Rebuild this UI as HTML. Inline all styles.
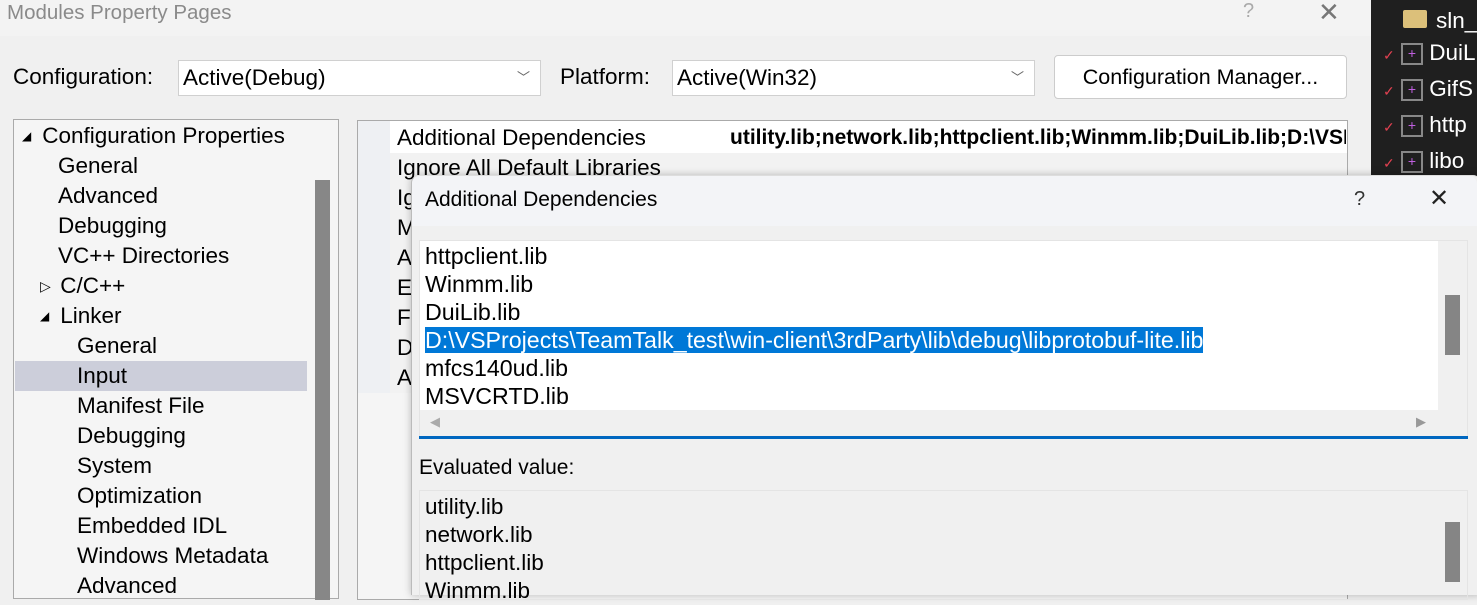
<!DOCTYPE html>
<html><head><style>
*{margin:0;padding:0;box-sizing:border-box}
body{width:1477px;height:590px;overflow:hidden;background:#f0f0f0;font-family:"Liberation Sans",sans-serif;font-size:22.5px;color:#000;position:relative}
.a{position:absolute;white-space:nowrap}
.r{height:30px;line-height:30px;position:relative}
.t{display:inline-block;width:14px;font-size:12px;vertical-align:top}
</style></head><body>
<div class="a" style="left:0;top:0;width:1371px;height:36px;background:#f3f3f3"></div>
<div class="a" style="left:7px;top:1px;color:#8a8a8a;font-size:20.5px">Modules Property Pages</div>
<div class="a" style="left:1243px;top:0;color:#aaa;font-size:20px">?</div>
<div class="a" style="left:1318px;top:-3px;color:#777;font-size:26px">✕</div>

<div class="a" style="left:13px;top:64px">Configuration:</div>
<div class="a" style="left:178px;top:60px;width:363px;height:36px;background:#fff;border:1px solid #d0d0d0;padding:4px 4px">Active(Debug)<span style="position:absolute;right:10px;top:6px;font-size:13px;color:#666">﹀</span></div>
<div class="a" style="left:560px;top:64px">Platform:</div>
<div class="a" style="left:672px;top:60px;width:363px;height:36px;background:#fff;border:1px solid #d0d0d0;padding:4px 4px">Active(Win32)<span style="position:absolute;right:10px;top:6px;font-size:13px;color:#666">﹀</span></div>
<div class="a" style="left:1054px;top:55px;width:293px;height:44px;background:#fff;border:1px solid #ccc;border-radius:4px;text-align:center;padding-top:9px;font-size:21.5px">Configuration Manager...</div>

<!-- tree -->
<div class="a" style="left:13px;top:119px;width:326px;height:480px;background:#f5f5f5;border:1px solid #aaa"></div>
<div class="a" style="left:315px;top:180px;width:15px;height:420px;background:#878787"></div>
<div class="a" style="left:15px;top:361px;width:292px;height:30px;background:#ccceda"></div>
<div class="a" style="left:22px;top:121px">
<div class="r"><span class="t">◢</span>&nbsp;Configuration Properties</div>
<div class="r" style="padding-left:36px">General</div>
<div class="r" style="padding-left:36px">Advanced</div>
<div class="r" style="padding-left:36px">Debugging</div>
<div class="r" style="padding-left:36px">VC++ Directories</div>
<div class="r" style="padding-left:18px"><span class="t" style="font-size:14px">▷</span>&nbsp;C/C++</div>
<div class="r" style="padding-left:18px"><span class="t">◢</span>&nbsp;Linker</div>
<div class="r" style="padding-left:55px">General</div>
<div class="r" style="padding-left:55px">Input</div>
<div class="r" style="padding-left:55px">Manifest File</div>
<div class="r" style="padding-left:55px">Debugging</div>
<div class="r" style="padding-left:55px">System</div>
<div class="r" style="padding-left:55px">Optimization</div>
<div class="r" style="padding-left:55px">Embedded IDL</div>
<div class="r" style="padding-left:55px">Windows Metadata</div>
<div class="r" style="padding-left:55px">Advanced</div>
</div>

<!-- property grid -->
<div class="a" style="left:357px;top:120px;width:991px;height:480px;background:#f5f5f5;border:1px solid #aaa"></div>
<div class="a" style="left:358px;top:121px;width:32px;height:272px;background:#eef0f3"></div>
<div class="a" style="left:390px;top:121px;width:957px;height:272px;background:#f2f2f2"></div>
<div class="a" style="left:390px;top:121px;width:957px;height:32px;background:#fff"></div>
<div class="a" style="left:397px;top:123px">
<div class="r">Additional Dependencies</div><div class="r">Ignore All Default Libraries</div><div class="r">Ig</div><div class="r">M</div><div class="r">A</div><div class="r">Er</div><div class="r">Fo</div><div class="r">D</div><div class="r">A</div></div>
<div class="a" style="left:730px;top:123px;width:616px;overflow:hidden;font-weight:bold;font-size:21px;line-height:30px">utility.lib;network.lib;httpclient.lib;Winmm.lib;DuiLib.lib;D:\VSProjects</div>

<!-- right dark panel -->
<div class="a" style="left:1371px;top:0;width:106px;height:176px;background:#1f1f1f;color:#fff;line-height:33px">
<div style="position:absolute;left:32px;top:10px;width:24px;height:18px;background:#dcc07a;border-radius:2px"></div>
<div style="position:absolute;left:65px;top:4px">sln_</div>
<div style="position:absolute;left:12px;top:36px;line-height:33px;color:#fff">
<div><span style="color:#e04050;font-size:14px">✓</span> <span style="display:inline-block;width:22px;height:22px;border:2px solid #888;color:#c060e0;font-size:14px;line-height:16px;text-align:center;vertical-align:middle">+</span> DuiL</div>
<div><span style="color:#e04050;font-size:14px">✓</span> <span style="display:inline-block;width:22px;height:22px;border:2px solid #888;color:#c060e0;font-size:14px;line-height:16px;text-align:center;vertical-align:middle">+</span> GifS</div>
<div><span style="color:#e04050;font-size:14px">✓</span> <span style="display:inline-block;width:22px;height:22px;border:2px solid #888;color:#c060e0;font-size:14px;line-height:16px;text-align:center;vertical-align:middle">+</span> http</div>
<div><span style="color:#e04050;font-size:14px">✓</span> <span style="display:inline-block;width:22px;height:22px;border:2px solid #888;color:#c060e0;font-size:14px;line-height:16px;text-align:center;vertical-align:middle">+</span> libo</div>
</div></div>

<!-- dialog -->
<div class="a" style="left:411px;top:175px;width:1070px;height:420px;background:#f0f0f0;border-left:1px solid #bbb;border-top:1px solid #ddd;border-radius:8px 8px 0 0;box-shadow:0 0 8px rgba(0,0,0,.25)"></div>
<div class="a" style="left:412px;top:176px;width:1065px;height:50px;background:#f3f4f7;border-radius:8px 8px 0 0"></div>
<div class="a" style="left:425px;top:188px;font-size:21px">Additional Dependencies</div>
<div class="a" style="left:1354px;top:188px;color:#333;font-size:20px">?</div>
<div class="a" style="left:1429px;top:184px;font-size:24px;color:#222">✕</div>

<div class="a" style="left:419px;top:240px;width:1049px;height:197px;border:1px solid #e4e4e4"></div>
<div class="a" style="left:420px;top:241px;width:1018px;height:169px;background:#fff"></div>
<div class="a" style="left:1445px;top:295px;width:15px;height:60px;background:#858585"></div>
<div class="a" style="left:425px;top:242px;line-height:28px;font-size:23.2px">
<div>httpclient.lib</div><div>Winmm.lib</div><div>DuiLib.lib</div>
<div><span style="background:#0078d7;color:#fff">D:\VSProjects\TeamTalk_test\win-client\3rdParty\lib\debug\libprotobuf-lite.lib</span></div>
<div>mfcs140ud.lib</div><div>MSVCRTD.lib</div></div>
<div class="a" style="left:430px;top:414px;font-size:13px;color:#aaa">◀</div>
<div class="a" style="left:1416px;top:414px;font-size:13px;color:#999">▶</div>
<div class="a" style="left:419px;top:436px;width:1049px;height:3px;background:#0067c0"></div>

<div class="a" style="left:419px;top:456px;font-size:21px">Evaluated value:</div>
<div class="a" style="left:419px;top:490px;width:1049px;height:110px;border:1px solid #e4e4e4"></div>
<div class="a" style="left:1445px;top:522px;width:15px;height:60px;background:#858585"></div>
<div class="a" style="left:425px;top:493px;line-height:28px">
<div>utility.lib</div><div>network.lib</div><div>httpclient.lib</div><div>Winmm.lib</div></div>
</body></html>
